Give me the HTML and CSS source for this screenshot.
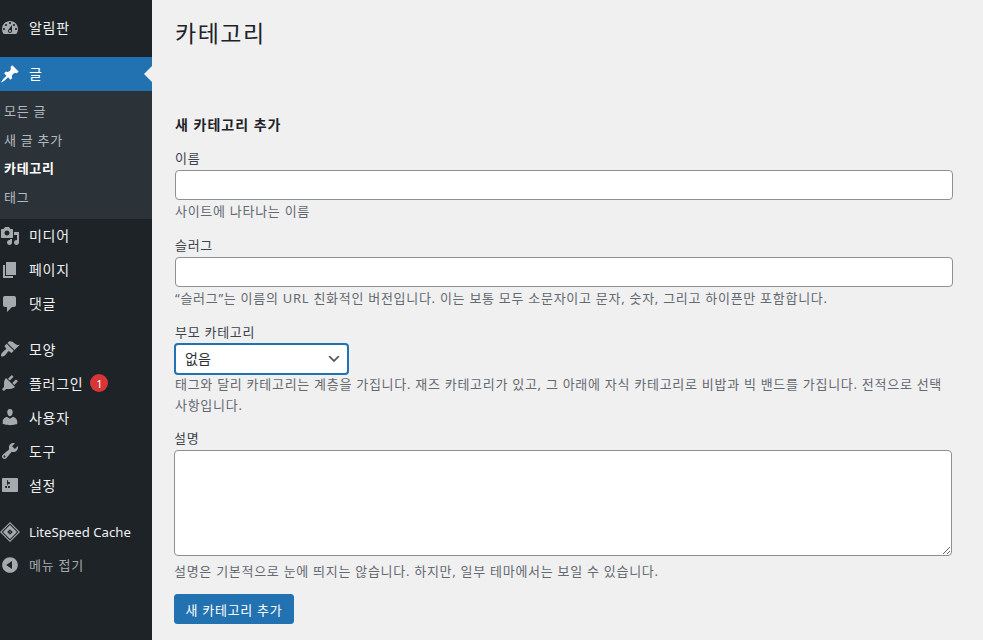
FILE: index.html
```html
<!DOCTYPE html>
<html lang="ko">
<head>
    <meta charset="UTF-8">
    <meta name="viewport" content="width=device-width, initial-scale=1.0">
    <title>카테고리</title>
    <link rel="stylesheet" href="styles.css">
</head>
<body>
    <div class="layout">
        <!-- Admin sidebar -->
        <nav class="sidebar">
            <a class="menu-item first">
                <svg class="menu-icon" viewBox="0 0 20 20"><path fill-rule="evenodd" d="M3.76 16h12.48c1.1-1.37 1.76-3.11 1.76-5 0-4.42-3.58-8-8-8s-8 3.58-8 8c0 1.89.66 3.63 1.76 5zM10 4c.55 0 1 .45 1 1s-.45 1-1 1-1-.45-1-1 .45-1 1-1zM6 6c.55 0 1 .45 1 1s-.45 1-1 1-1-.45-1-1 .45-1 1-1zm8 0c.55 0 1 .45 1 1s-.45 1-1 1-1-.45-1-1 .45-1 1-1zm-5.37 5.55L12 7v6c0 1.1-.9 2-2 2s-2-.9-2-2c0-.57.24-1.08.63-1.45zM4 10c.55 0 1 .45 1 1s-.45 1-1 1-1-.45-1-1 .45-1 1-1zm12 0c.55 0 1 .45 1 1s-.45 1-1 1-1-.45-1-1 .45-1 1-1zm-5 3c0-.55-.45-1-1-1s-1 .45-1 1 .45 1 1 1 1-.45 1-1z"/></svg>
                <span class="menu-label">알림판</span>
            </a>

            <a class="menu-item current">
                <svg class="menu-icon" viewBox="0 0 20 20"><path d="M10.44 3.02l1.82-1.82 6.36 6.35-1.83 1.82c-1.05-.68-2.48-.57-3.41.36l-.75.75c-.92.93-1.04 2.35-.35 3.41l-1.83 1.82-2.41-2.41-2.8 2.79c-.42.42-3.38 2.71-3.8 2.29s1.86-3.39 2.28-3.81l2.79-2.79L4.1 9.36l1.83-1.82c1.05.69 2.48.57 3.4-.36l.75-.75c.93-.92 1.05-2.35.36-3.41z"/></svg>
                <span class="menu-label">글</span>
            </a>
            <div class="submenu">
                <a class="submenu-item">모든 글</a>
                <a class="submenu-item">새 글 추가</a>
                <a class="submenu-item active">카테고리</a>
                <a class="submenu-item">태그</a>
            </div>

            <a class="menu-item">
                <svg class="menu-icon" viewBox="0 0 20 20"><path fill-rule="evenodd" d="M13 11V4c0-.55-.45-1-1-1h-1.67L9 1H5L3.67 3H2c-.55 0-1 .45-1 1v7c0 .55.45 1 1 1h10c.55 0 1-.45 1-1zM7 4.5c1.38 0 2.5 1.12 2.5 2.5S8.38 9.5 7 9.5 4.5 8.38 4.5 7 5.62 4.5 7 4.5zM14 6h5v10.5c0 1.38-1.12 2.5-2.5 2.5S14 17.88 14 16.5s1.12-2.5 2.5-2.5c.17 0 .34.02.5.05V9h-3V6zm-4 8.05V13h2v3.5c0 1.38-1.12 2.5-2.5 2.5S7 17.88 7 16.5 8.12 14 9.5 14c.17 0 .34.02.5.05z"/></svg>
                <span class="menu-label">미디어</span>
            </a>
            <a class="menu-item">
                <svg class="menu-icon" viewBox="0 0 20 20"><path d="M6 15V2h10v13H6zm-1 1h8v2H3V5h2v11z"/></svg>
                <span class="menu-label">페이지</span>
            </a>
            <a class="menu-item">
                <svg class="menu-icon" viewBox="0 0 20 20"><path d="M5 2h9c1.1 0 2 .9 2 2v7c0 1.1-.9 2-2 2h-2l-5 5v-5H5c-1.1 0-2-.9-2-2V4c0-1.1.9-2 2-2z"/></svg>
                <span class="menu-label">댓글</span>
            </a>

            <a class="menu-item group-start">
                <svg class="menu-icon" viewBox="0 0 20 20"><path d="M14.48 11.06L7.41 3.99l1.5-1.5c.5-.56 2.3-.47 3.51.32 1.21.8 1.43 1.28 2.91 2.1 1.18.64 2.45 1.26 4.45.85zm-.71.71L6.7 4.7 4.93 6.47c-.39.39-.39 1.02 0 1.41l1.06 1.06c.39.39.39 1.03 0 1.42-.6.6-1.43 1.11-2.21 1.69-.35.26-.7.53-1.01.84-1.43 1.43-2.4 3.34-1.46 4.28.94.94 2.85-.03 4.28-1.46.31-.31.58-.66.84-1.01.58-.78 1.09-1.61 1.69-2.21.39-.39 1.03-.39 1.42 0l1.06 1.06c.39.39 1.02.39 1.41 0z"/></svg>
                <span class="menu-label">모양</span>
            </a>
            <a class="menu-item">
                <svg class="menu-icon" viewBox="0 0 20 20"><path d="M13.11 4.36L9.87 7.6 8 5.73l3.24-3.24c.35-.34 1.05-.2 1.56.32.52.51.66 1.21.31 1.55zm-8 1.77l.91-1.12 9.01 9.01-1.19.84c-.71.71-2.63 1.16-3.82 1.16H6.14L4.9 17.26c-.59.59-1.54.59-2.12 0-.59-.58-.59-1.53 0-2.12l1.24-1.24v-3.88c0-1.13.4-3.19 1.09-3.89zm7.26 3.97l3.24-3.24c.34-.35 1.04-.21 1.55.31.52.51.66 1.21.31 1.55l-3.24 3.25z"/></svg>
                <span class="menu-label">플러그인</span>
                <span class="count">1</span>
            </a>
            <a class="menu-item">
                <svg class="menu-icon" viewBox="0 0 20 20"><path d="M10 9.25c-2.27 0-2.73-3.44-2.73-3.44C7 4.02 7.82 2 9.97 2c2.16 0 2.98 2.02 2.71 3.81 0 0-.41 3.44-2.68 3.44zm0 2.57L12.72 10c2.39 0 4.52 2.33 4.52 4.53v2.49s-3.65 1.13-7.24 1.13c-3.65 0-7.24-1.13-7.24-1.13v-2.49c0-2.25 1.94-4.48 4.47-4.48z"/></svg>
                <span class="menu-label">사용자</span>
            </a>
            <a class="menu-item">
                <svg class="menu-icon" viewBox="0 0 20 20"><path fill-rule="evenodd" d="M16.68 9.77c-1.34 1.34-3.3 1.67-4.95.99l-5.41 6.52c-.99.99-2.59.99-3.58 0s-.99-2.59 0-3.57l6.52-5.42c-.68-1.65-.35-3.61.99-4.95 1.28-1.28 3.12-1.62 4.72-1.06l-2.89 2.89 2.82 2.82 2.86-2.87c.53 1.58.18 3.39-1.08 4.65zM3.81 16.21c.4.39 1.04.39 1.43 0 .4-.4.4-1.04 0-1.43-.39-.4-1.03-.4-1.43 0-.39.39-.39 1.03 0 1.43z"/></svg>
                <span class="menu-label">도구</span>
            </a>
            <a class="menu-item">
                <svg class="menu-icon" viewBox="0 0 20 20"><path fill-rule="evenodd" d="M18 16V4c0-.55-.45-1-1-1H3c-.55 0-1 .45-1 1v12c0 .55.45 1 1 1h14c.55 0 1-.45 1-1zM8 11h1c.55 0 1 .45 1 1s-.45 1-1 1H8v1.5c0 .28-.22.5-.5.5s-.5-.22-.5-.5V13H6c-.55 0-1-.45-1-1s.45-1 1-1h1V5.5c0-.28.22-.5.5-.5s.5.22.5.5V7h1c.55 0 1 .45 1 1s-.45 1-1 1h-1v5.5c0 .28-.22.5-.5.5s-.5-.22-.5-.5V9z"/></svg>
                <span class="menu-label">설정</span>
            </a>

            <a class="menu-item group-start litespeed">
                <svg class="menu-icon" viewBox="0 0 20 20"><path fill-rule="evenodd" d="M10 0l10 10-10 10L0 10zM10 1.6L1.6 10l8.4 8.4 8.4-8.4z"/><path fill-rule="evenodd" d="M10 3l7 7-7 7-7-7zM10 7.2L7.2 10l2.8 2.8 2.8-2.8z"/><path d="M10.6 8l-1.4 2.3h.9l-.6 1.7 1.5-2.3h-1z"/></svg>
                <span class="menu-label">LiteSpeed Cache</span>
            </a>
            <a class="menu-item collapse">
                <svg class="menu-icon" viewBox="0 0 20 20"><path fill-rule="evenodd" d="M10 2.16c4.33 0 7.84 3.51 7.84 7.84s-3.51 7.84-7.84 7.84S2.16 14.33 2.16 10 5.71 2.16 10 2.16zm2 11.72V6.12L6.18 9.97z"/></svg>
                <span class="menu-label">메뉴 접기</span>
            </a>
        </nav>

        <!-- Main content -->
        <main class="content">
            <h1 class="page-title">카테고리</h1>
            <h2 class="form-title">새 카테고리 추가</h2>

            <div class="form-field">
                <label class="field-label">이름</label>
                <input class="text-input" type="text">
                <p class="field-desc">사이트에 나타나는 이름</p>
            </div>

            <div class="form-field">
                <label class="field-label">슬러그</label>
                <input class="text-input" type="text">
                <p class="field-desc">“슬러그”는 이름의 URL 친화적인 버전입니다. 이는 보통 모두 소문자이고 문자, 숫자, 그리고 하이픈만 포함합니다.</p>
            </div>

            <div class="form-field parent-field">
                <label class="field-label">부모 카테고리</label>
                <div class="select-box">
                    <span>없음</span>
                    <svg class="select-arrow" viewBox="0 0 20 20"><path d="M5 6l5 5 5-5 2 1-7 7-7-7z"/></svg>
                </div>
                <p class="field-desc">태그와 달리 카테고리는 계층을 가집니다. 재즈 카테고리가 있고, 그 아래에 자식 카테고리로 비밥과 빅 밴드를 가집니다. 전적으로 선택 사항입니다.</p>
            </div>

            <div class="form-field description-field">
                <label class="field-label">설명</label>
                <textarea class="text-area"></textarea>
                <p class="field-desc">설명은 기본적으로 눈에 띄지는 않습니다. 하지만, 일부 테마에서는 보일 수 있습니다.</p>
            </div>

            <button class="submit-button">새 카테고리 추가</button>
        </main>
    </div>
</body>
</html>
```

FILE: styles.css
```css
* {
    box-sizing: border-box;
}

html, body {
    height: 100%;
}

body {
    margin: 0;
    overflow: hidden;
    font-family: "Noto Sans", "Noto Sans CJK KR", sans-serif;
    font-size: 13px;
    letter-spacing: 0.72px;
    color: #3c434a;
    background: #f0f0f1;
}

.layout {
    display: flex;
    height: 640px;
}

/* Sidebar */
.sidebar {
    width: 152px;
    flex-shrink: 0;
    background: #1d2327;
    color: #f0f0f1;
}

.menu-item {
    display: flex;
    align-items: center;
    height: 34px;
    gap: 9px;
    font-size: 14px;
    color: #f0f0f1;
    position: relative;
}

.menu-label {
    margin-top: -2px;
}

.group-start .menu-label,
.group-start ~ .menu-item .menu-label {
    margin-top: 0;
}

.menu-item.first {
    margin-top: 11px;
    margin-bottom: 12px;
}

.menu-item.group-start {
    margin-top: 11px;
}

.menu-item.litespeed {
    margin-top: 13px;
    margin-bottom: -1px;
    letter-spacing: 0;
    font-size: 13.2px;
}

.menu-item.collapse {
    color: #a7aaad;
    font-size: 13px;
}

.menu-item.collapse .menu-label {
    margin-top: -2px;
}

.menu-icon {
    width: 20px;
    height: 20px;
    flex-shrink: 0;
    fill: #a7aaad;
}

.menu-item.current {
    background: #2271b1;
    color: #fff;
}

.menu-item.current .menu-icon {
    fill: #fff;
}

.menu-item.current::after {
    content: "";
    position: absolute;
    right: 0;
    top: 50%;
    margin-top: -8px;
    border: 8px solid transparent;
    border-right-color: #f0f0f1;
}

.count {
    display: inline-flex;
    align-items: center;
    justify-content: center;
    width: 18px;
    height: 18px;
    margin-left: -2px;
    border-radius: 50%;
    background: #d63638;
    color: #fff;
    font-size: 11px;
    letter-spacing: 0;
}

.submenu {
    display: flex;
    flex-direction: column;
    height: 128px;
    padding-top: 6px;
    background: #2c3338;
}

.submenu-item {
    height: 28.7px;
    line-height: 28.7px;
    padding-left: 4px;
    font-size: 13px;
    color: rgba(240, 246, 252, 0.7);
}

.submenu-item.active {
    color: #fff;
    font-weight: 600;
}

/* Main content */
.content {
    flex: 1;
    min-width: 0;
    padding: 0 30px 0 23px;
}

.page-title {
    margin: 16px 0 0;
    font-size: 23px;
    font-weight: 400;
    line-height: 34px;
    letter-spacing: 1.5px;
    color: #1d2327;
}

.form-title {
    margin: 64px 0 0;
    font-size: 14px;
    font-weight: 600;
    line-height: 22px;
    letter-spacing: 1px;
    color: #1d2327;
}

.form-field {
    margin-top: 12px;
    display: flex;
    flex-direction: column;
}

.form-field + .form-field {
    margin-top: 13px;
}

.field-label {
    font-size: 13px;
    line-height: 20px;
    margin-bottom: 2px;
}

.text-input {
    display: block;
    width: 100%;
    height: 30px;
    border: 1px solid #8c8f94;
    border-radius: 4px;
    background: #fff;
}

.field-desc {
    margin: 1px 0 0;
    font-size: 13px;
    line-height: 21px;
    color: #646970;
}

.select-box {
    display: flex;
    align-items: center;
    justify-content: space-between;
    width: 175px;
    height: 32px;
    margin-top: -1px;
    margin-left: -1px;
    padding: 0 5px 2px 9px;
    border: 2px solid #2271b1;
    border-radius: 4px;
    background: #fff;
    font-size: 14px;
    letter-spacing: 0;
    color: #2c3338;
}

.select-arrow {
    width: 16px;
    height: 16px;
    margin-top: 2px;
    fill: #50575e;
}

.parent-field .field-desc {
    margin-top: -1px;
}

.description-field {
    margin-left: -1px;
    margin-right: 1px;
}

.form-field.description-field {
    margin-top: 12px;
}

.description-field .field-desc {
    margin-top: 5px;
}

.text-area {
    display: block;
    width: 100%;
    height: 106px;
    border: 1px solid #8c8f94;
    border-radius: 4px;
    background: #fff;
}

.submit-button {
    display: block;
    width: 120px;
    height: 30px;
    margin-top: 12px;
    margin-left: -1px;
    padding: 0;
    border: 1px solid #2271b1;
    border-radius: 3px;
    background: #2271b1;
    color: #fff;
    font-family: inherit;
    font-size: 13px;
    letter-spacing: 0.72px;
}
```
